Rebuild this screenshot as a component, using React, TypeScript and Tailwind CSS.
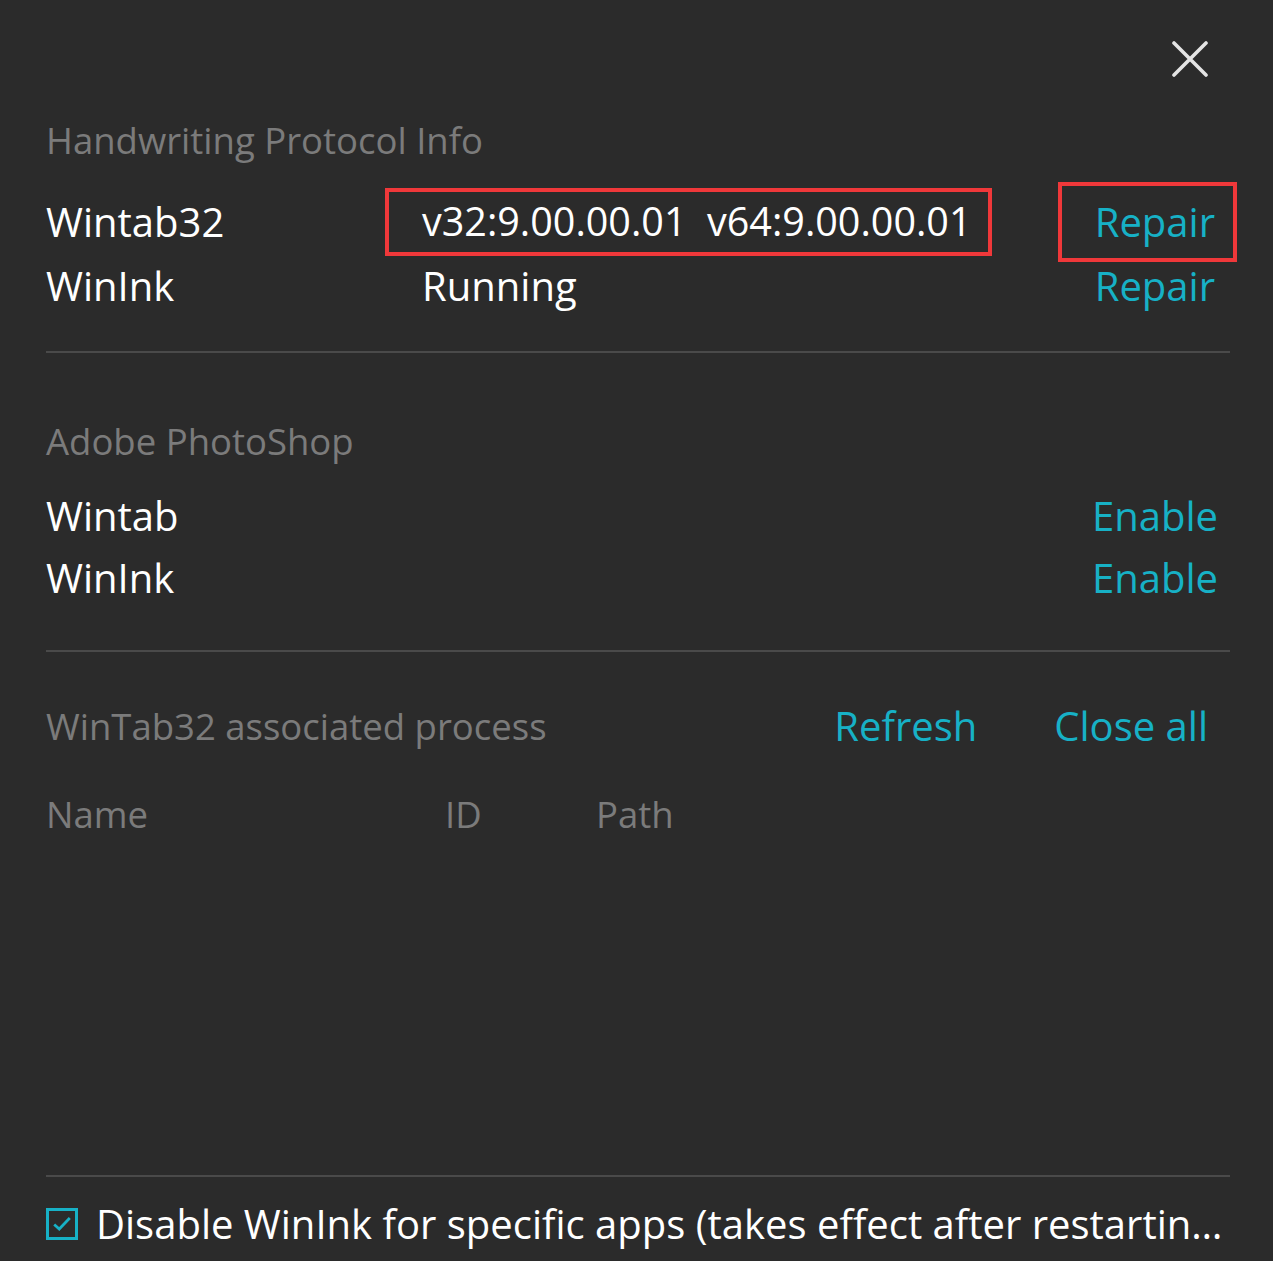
const font = { fontFamily: '"Open Sans", "Noto Sans", sans-serif' };

const Heading = ({ children }: { children: React.ReactNode }) => (
  <div className="h-16 flex items-center text-[36.5px] text-[#7b7b7b]">{children}</div>
);

const App = () => {
  return (
    <div
      className="w-[1273px] h-[1261px] bg-[#2b2b2b] text-white pl-[46px] pr-[43px] flex flex-col overflow-hidden"
      style={font}
    >
      {/* header */}
      <div className="flex justify-end pt-[41px] pr-[22px] h-[108px]">
        <svg viewBox="0 0 36 36" className="w-[36px] h-[36px]" fill="none" stroke="#e4e4e4" strokeWidth={3.6} strokeLinecap="round">
          <path d="M2 2l32 32M34 2L2 34" />
        </svg>
      </div>

      {/* Handwriting protocol */}
      <Heading>Handwriting Protocol Info</Heading>
      <div className="mt-[18px] text-[40px]">
        <div className="h-16 flex items-center">
          <span className="w-[376px] shrink-0">Wintab32</span>
          <span className="relative whitespace-pre text-[39.5px]">
            v32:9.00.00.01  v64:9.00.00.01
            <span className="absolute -left-[37px] -right-[20px] -top-[4px] -bottom-[4px] border-[4px] border-[#f0383a]" />
          </span>
          <span className="ml-auto relative mr-[15px] text-[#17b1c6]">
            Repair
            <span className="absolute -left-[37px] -right-[22px] -top-[10px] -bottom-[10px] border-[4px] border-[#f0383a]" />
          </span>
        </div>
        <div className="h-16 flex items-center">
          <span className="w-[376px] shrink-0">WinInk</span>
          <span>Running</span>
          <span className="ml-auto mr-[15px] text-[#17b1c6]">Repair</span>
        </div>
      </div>
      <div className="mt-[33px] h-[2px] bg-[#4a4a4a]" />

      {/* Photoshop */}
      <div className="mt-[56px]">
        <Heading>Adobe PhotoShop</Heading>
      </div>
      <div className="mt-[12px] text-[40px]">
        <div className="h-[62px] flex items-center">
          <span>Wintab</span>
          <span className="ml-auto mr-[12px] text-[#17b1c6]">Enable</span>
        </div>
        <div className="h-[62px] flex items-center">
          <span>WinInk</span>
          <span className="ml-auto mr-[12px] text-[#17b1c6]">Enable</span>
        </div>
      </div>
      <div className="mt-[41px] h-[2px] bg-[#4a4a4a]" />

      {/* processes */}
      <div className="mt-[42px] flex items-center">
        <Heading>WinTab32 associated process</Heading>
        <span className="ml-auto text-[40px] text-[#17b1c6]">Refresh</span>
        <span className="ml-[77px] mr-[22px] text-[40px] text-[#17b1c6]">Close all</span>
      </div>
      <div className="mt-[24px] h-16 flex items-center text-[36.5px] text-[#7b7b7b]">
        <span className="w-[399px]">Name</span>
        <span className="w-[151px]">ID</span>
        <span>Path</span>
      </div>
      <div className="flex-1" />
      <div className="h-[2px] shrink-0 bg-[#4a4a4a]" />

      {/* footer, runs past the bottom edge */}
      <div className="h-[94px] shrink-0 -mb-[10px] flex items-center gap-[18px]">
        <span className="w-[32px] h-[32px] shrink-0 border-[3px] border-[#17b1c6] flex items-center justify-center">
          <svg viewBox="0 0 24 24" className="w-[22px] h-[22px]" fill="none" stroke="#17b1c6" strokeWidth={3}>
            <path d="M3.5 12.5l5.5 5L20.5 5.5" />
          </svg>
        </span>
        <span className="text-[40px] whitespace-nowrap overflow-hidden text-ellipsis">
          Disable WinInk for specific apps (takes effect after restarting the app)
        </span>
      </div>
    </div>
  );
};

export default App;
